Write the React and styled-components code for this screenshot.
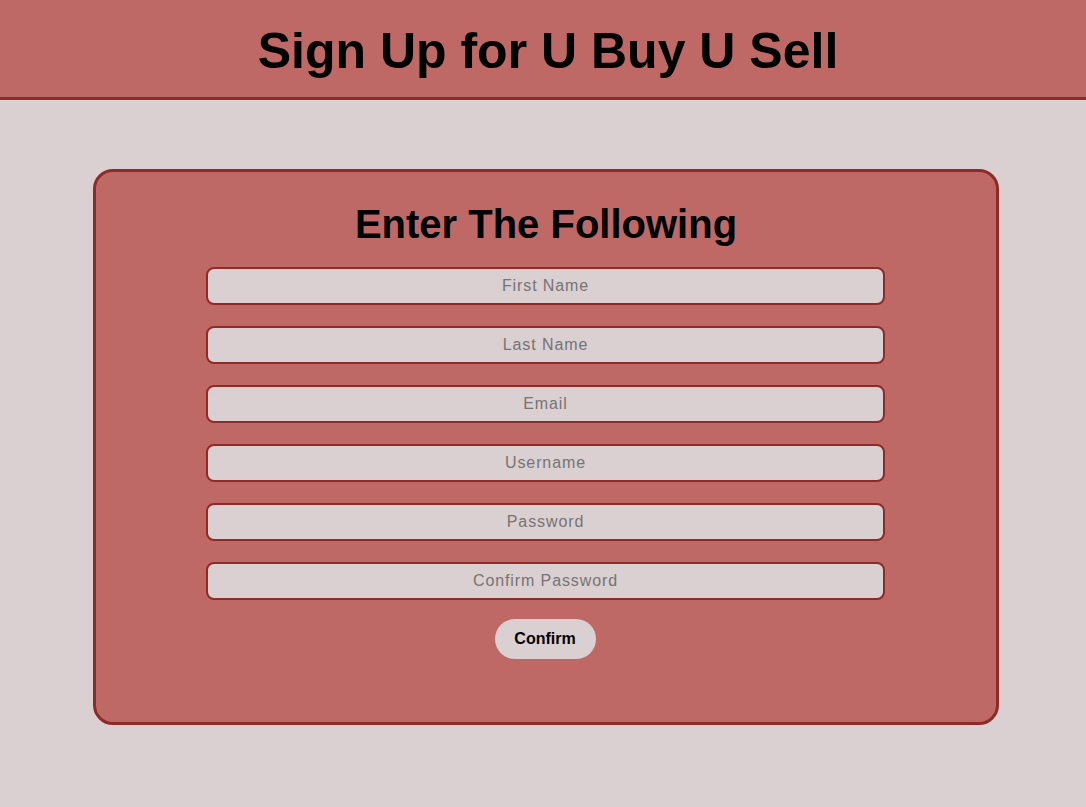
import styled, { createGlobalStyle } from "styled-components";

const GlobalStyle = createGlobalStyle`
  html, body {
    margin: 0;
    padding: 0;
    background: #dacfd1;
    font-family: "Liberation Sans", Arial, sans-serif;
  }
`;

const Header = styled.header`
  height: 97px;
  background: #bf6967;
  border-bottom: 3px solid #8e2a27;
  display: flex;
  align-items: center;
  justify-content: center;
  padding-left: 10px;
  padding-top: 4px;
  box-sizing: border-box;
  height: 100px;

  h1 {
    margin: 0;
    font-size: 50px;
    font-weight: bold;
    color: #000;
  }
`;

const Card = styled.form`
  box-sizing: border-box;
  width: 906px;
  height: 556px;
  margin: 69px 0 0 93px;
  background: #bf6967;
  border: 3px solid #8e2a27;
  border-radius: 20px;
  display: flex;
  flex-direction: column;
  align-items: center;
  padding-top: 30px;
`;

const Title = styled.h2`
  margin: 0 0 20px 0;
  font-size: 40px;
  font-weight: bold;
  color: #000;
`;

const Field = styled.input`
  box-sizing: border-box;
  width: 679px;
  height: 38px;
  margin-bottom: 21px;
  margin-left: -1px;
  background: #dacfd1;
  border: 2px solid #8e2a27;
  border-radius: 8px;
  text-align: center;
  font-family: "Liberation Sans", Arial, sans-serif;
  font-size: 16px;
  letter-spacing: 0.9px;
  outline: none;

  &::placeholder {
    color: #767474;
  }
`;

const ConfirmButton = styled.button`
  width: 101px;
  height: 40px;
  margin: -2px 0 0 -2px;
  background: #dacfd1;
  border: none;
  border-radius: 20px;
  font-family: "Liberation Sans", Arial, sans-serif;
  font-size: 16px;
  font-weight: bold;
  color: #000;
  cursor: pointer;
`;

const fields = [
  ["text", "First Name"],
  ["text", "Last Name"],
  ["email", "Email"],
  ["text", "Username"],
  ["password", "Password"],
  ["password", "Confirm Password"],
];

export default function App() {
  return (
    <>
      <GlobalStyle />
      <Header>
        <h1>Sign Up for U Buy U Sell</h1>
      </Header>
      <Card onSubmit={(e) => e.preventDefault()}>
        <Title>Enter The Following</Title>
        {fields.map(([type, label]) => (
          <Field key={label} type={type} placeholder={label} />
        ))}
        <ConfirmButton type="submit">Confirm</ConfirmButton>
      </Card>
    </>
  );
}
